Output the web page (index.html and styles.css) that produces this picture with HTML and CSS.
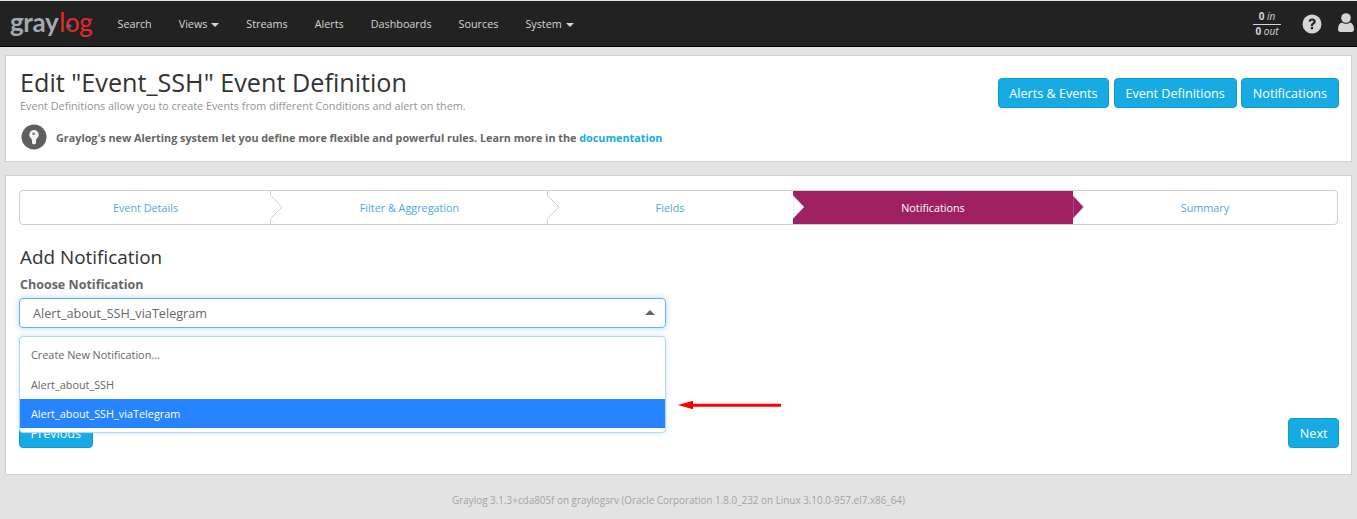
FILE: index.html
```html
<!DOCTYPE html>
<html lang="en">
<head>
<meta charset="utf-8">
<title>Edit Event Definition</title>
<link rel="stylesheet" href="styles.css">
</head>
<body>
<nav class="navbar">
  <a class="logo"><span class="logo-gray">gray</span><span class="logo-log">log</span><svg class="logo-mark" width="8" height="8" viewBox="0 0 8 8"><path d="M1 3.300H3.800V1.500L7 4 3.800 6.500V4.700H1z" fill="#666a72"/></svg></a>
  <ul class="nav-links">
    <li>Search</li>
    <li>Views <i class="caret"></i></li>
    <li>Streams</li>
    <li>Alerts</li>
    <li>Dashboards</li>
    <li>Sources</li>
    <li>System <i class="caret"></i></li>
  </ul>
  <div class="nav-right">
    <div class="throughput">
      <div class="tp-in"><b>0</b> <em>in</em></div>
      <div class="tp-out"><b>0</b> <em>out</em></div>
    </div>
    <svg class="icon-help" width="20" height="20" viewBox="0 0 20 20"><circle cx="10" cy="10" r="9.500" fill="#d5d5d5"/><path d="M6.600 7.600C6.800 5.600 8.200 4.500 10.200 4.500c2 0 3.500 1.200 3.500 3 0 1.500-.9 2.200-1.900 2.900-.7.500-.9.800-.9 1.600H8.800c0-1.500.4-2.200 1.400-2.900.8-.6 1.200-.9 1.200-1.500 0-.7-.5-1.100-1.200-1.100-.8 0-1.300.5-1.400 1.300z" fill="#222"/><rect x="8.800" y="12.800" width="2.300" height="2.500" fill="#222"/></svg>
    <svg class="icon-user" width="16" height="19" viewBox="0 0 16 19"><circle cx="8" cy="5" r="4.800" fill="#d5d5d5"/><path d="M0 16.500C0 12.500 1.500 10 4 9.500c1 .9 2.500 1.300 4 1.300s3-.4 4-1.300c2.500.5 4 3 4 7 0 1.500-1 2.500-2.500 2.500h-11C1 19 0 18 0 16.500z" fill="#d5d5d5"/></svg>
  </div>
</nav>

<main class="content">
  <section class="panel panel-head">
    <div class="head-main">
      <h1>Edit "Event_SSH" Event Definition</h1>
      <p class="lead">Event Definitions allow you to create Events from different Conditions and alert on them.</p>
      <div class="notice">
        <svg class="bulb" width="26" height="26" viewBox="0 0 26 26"><circle cx="13" cy="13" r="12.500" fill="#5f5f5f"/><path d="M13 6a4.700 4.700 0 0 0-3.200 8.100c.8.800 1.100 1.500 1.200 2.400v2.700l1 1h2l1-1v-2.700c.1-.9.400-1.600 1.200-2.400A4.700 4.700 0 0 0 13 6z" fill="#f4f4f4"/><circle cx="12.600" cy="9.800" r="1.400" fill="#7a7a7a"/></svg>
        <span>Graylog's new Alerting system let you define more flexible and powerful rules. Learn more in the <a class="link">documentation</a></span>
      </div>
    </div>
    <div class="head-actions">
      <a class="btn btn-first">Alerts &amp; Events</a>
      <a class="btn btn-second">Event Definitions</a>
      <a class="btn">Notifications</a>
    </div>
  </section>

  <section class="panel panel-body">
    <div class="wizard">
      <div class="step step-1">Event Details<svg class="chev" width="14" height="35" viewBox="0 0 14 35"><path d="M.5 0V5.500L12 17 .5 28.500V35" fill="#fff" stroke="#cfcfcf"/></svg></div>
      <div class="step step-2">Filter &amp; Aggregation<svg class="chev" width="14" height="35" viewBox="0 0 14 35"><path d="M.5 0V5.500L12 17 .5 28.500V35" fill="#fff" stroke="#cfcfcf"/></svg></div>
      <div class="step step-3">Fields</div>
      <div class="step step-4 active"><svg class="notch" width="12" height="33" viewBox="0 0 12 33"><path d="M0 4.500 L11 16 0 27.500z" fill="#fff" stroke="#d9c8d2" stroke-width=".6"/></svg>Notifications<svg class="tip" width="12" height="33" viewBox="0 0 12 33"><path d="M0 4.500 L10.500 16 0 27.500z" fill="#9e1f63" stroke="#d9b6c9" stroke-width=".6"/></svg></div>
      <div class="step step-5">Summary</div>
    </div>

    <h2>Add Notification</h2>
    <label class="field-label">Choose Notification</label>
    <div class="select-wrap">
      <div class="select"><span>Alert_about_SSH_viaTelegram</span><i class="select-arrow"></i></div>
      <ul class="menu">
        <li>Create New Notification...</li>
        <li>Alert_about_SSH</li>
        <li class="selected">Alert_about_SSH_viaTelegram</li>
      </ul>
    </div>
    <div class="wizard-actions">
      <a class="btn btn-sm">Previous</a>
      <a class="btn btn-sm">Next</a>
    </div>
    <svg class="red-arrow" width="104" height="12" viewBox="0 0 104 12"><path d="M0 6 L15 1.800 V4.700 H103 V7.700 H15 V10.200z" fill="#f00"/></svg>
  </section>
</main>

<footer class="footer">Graylog 3.1.3+cda805f on graylogsrv (Oracle Corporation 1.8.0_232 on Linux 3.10.0-957.el7.x86_64)</footer>
</body>
</html>
```

FILE: styles.css
```css
* { box-sizing: border-box; }
html, body { margin: 0; padding: 0; }
body {
  background: #e3e3e3;
  font-family: "Open Sans", sans-serif;
  font-size: 12px;
  color: #666;
  padding-top: 1px;
  height: 519px;
  overflow: hidden;
}
.navbar {
  display: flex;
  align-items: center;
  height: 46px;
  background: #222;
  border-bottom: 1px solid #000;
  padding: 0 0 0 10px;
  color: #d5d5d5;
}
.logo {
  display: block;
  position: relative;
  width: 83px;
  font-family: "Lato", sans-serif;
  font-size: 26px;
  line-height: 40px;
  letter-spacing: -0.4px;
  margin-top: -4px;
  font-weight: 700;
}
.logo-gray { color: #a4a8b2; }
.logo-log { color: #e6282f; font-weight: 400; letter-spacing: -0.4px; margin-left: 1px; }
.logo-mark { position: absolute; left: 55px; top: 20px; }
.nav-links {
  display: flex;
  list-style: none;
  margin: 0 0 0 24.500px;
  padding: 0;
  gap: 27px;
  font-size: 10.800px;
}
.caret {
  display: inline-block;
  width: 0;
  height: 0;
  margin-left: 1px;
  vertical-align: middle;
  border-left: 4px solid transparent;
  border-right: 4px solid transparent;
  border-top: 4px solid #d5d5d5;
}
.nav-right {
  margin-left: auto;
  display: flex;
  align-items: center;
}
.throughput {
  width: 28px;
  text-align: center;
  font-size: 10px;
  line-height: 13px;
  margin-right: 21px;
}
.throughput b { font-weight: 700; }
.tp-in { border-bottom: 1px solid #d5d5d5; padding-bottom: 1px; }
.icon-help { margin-right: 16px; }
.icon-user { margin-right: 3px; margin-top: -2px; }

.content { padding: 8px 5px 0; }
.panel {
  background: #fff;
  border: 1px solid #d1d1d1;
}
.panel-head {
  display: flex;
  justify-content: space-between;
  height: 107px;
  padding: 0 12px 0 14px;
  margin-bottom: 13px;
}
h1 {
  margin: 11px 0 0;
  font-size: 25.200px;
  line-height: 30px;
  font-weight: 400;
  color: #333;
}
.lead {
  margin: 1px 0 0;
  font-size: 10.800px;
  line-height: 16px;
  color: #939393;
}
.notice {
  display: flex;
  align-items: center;
  gap: 9px;
  margin-top: 10px;
  padding-left: 1px;
  font-size: 10.800px;
  font-weight: 700;
  color: #666;
}
.bulb { display: block; }
.link { color: #16ace3; }
.head-actions {
  display: flex;
  gap: 4px;
  margin-top: 22px;
}
.btn {
  display: block;
  height: 30px;
  padding: 0 11px;
  background: #16ace3;
  border: 1px solid #1399cb;
  border-radius: 4px;
  color: #fff;
  font-size: 12.600px;
  line-height: 29px;
}
.btn-first { padding: 0 10px; }
.btn-second { margin-left: 1px; }
.panel-body {
  position: relative;
  height: 300px;
  padding: 14px 13px 0;
}
.wizard {
  display: flex;
  height: 35px;
  border: 1px solid #cfcfcf;
  border-radius: 4px;
  font-size: 10.800px;
  color: #4fa8e0;
}
.step {
  position: relative;
  display: flex;
  align-items: center;
  justify-content: center;
}
.step-1 { width: 250px; padding-left: 1px; }
.step-2 { width: 277px; padding-left: 2px; }
.step-3 { width: 246px; }
.step-4 { width: 280px; }
.step-5 { flex: 1; }
.active { background: #9e1f63; color: #fff; }
.chev { position: absolute; right: -14px; top: -1px; z-index: 1; }
.notch { position: absolute; left: 0; top: 0; }
.tip { position: absolute; right: -12px; top: 0; z-index: 1; }
h2 {
  margin: 20px 0 0;
  padding-left: 1px;
  font-size: 18.900px;
  line-height: 25px;
  font-weight: 400;
  color: #333;
}
.field-label {
  display: block;
  margin-top: 6px;
  padding-left: 1px;
  font-size: 12.500px;
  line-height: 17px;
  font-weight: 700;
  color: #666;
}
.select-wrap { position: relative; width: 647px; margin-top: 5px; }
.select {
  display: flex;
  align-items: center;
  justify-content: space-between;
  height: 30px;
  padding: 0 13px;
  border: 1px solid #66afe9;
  border-radius: 4px;
  box-shadow: 0 0 6px rgba(102,175,233,.5);
  font-size: 12.650px;
  color: #666;
}
.select-arrow {
  display: block;
  width: 0;
  height: 0;
  margin: -2px -3px 0 0;
  border-left: 5px solid transparent;
  border-right: 5px solid transparent;
  border-bottom: 5px solid #666;
}
.menu {
  position: absolute;
  left: 0;
  right: 0;
  top: 38px;
  z-index: 2;
  margin: 0;
  padding: 4px 0;
  list-style: none;
  height: 97px;
  background: #fff;
  border: 1px solid #b3d7f5;
  border-radius: 4px;
  box-shadow: 0 0 4px rgba(102,175,233,.35);
  font-size: 10.850px;
  color: #666;
}
.menu li { height: 29px; line-height: 28px; padding: 0 11px; }
.menu li + li { line-height: 30px; }
.selected { background: #2684ff; color: #fff; }
.wizard-actions {
  display: flex;
  justify-content: space-between;
  margin: 90px -1px 0 0;
}
.btn-sm { padding: 0 10.500px; }
.red-arrow { position: absolute; left: 672px; top: 223px; }
.footer {
  text-align: center;
  margin-top: 17px;
  font-size: 9.900px;
  line-height: 16px;
  color: #a3a3a3;
}
```
